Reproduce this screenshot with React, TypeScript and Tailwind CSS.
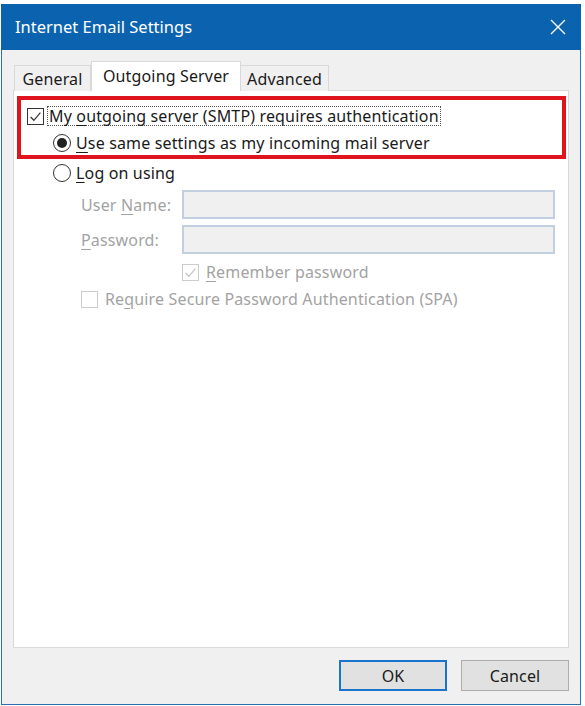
import React from 'react';

const font = { fontFamily: '"Noto Sans", "Open Sans", sans-serif' };

function CheckBox({ checked, disabled }: { checked?: boolean; disabled?: boolean }) {
  const stroke = disabled ? '#c4c4c4' : '#333333';
  return (
    <span
      className={`flex h-[17px] w-[17px] shrink-0 items-center justify-center border bg-white ${
        disabled ? 'border-[#cccccc]' : 'border-[#333333]'
      }`}
    >
      {checked && (
        <svg width="13" height="13" viewBox="0 0 12 12" fill="none">
          <path d="M1.5 6.5 L4.5 9.5 L10.5 2.5" stroke={stroke} strokeWidth="1.1" />
        </svg>
      )}
    </span>
  );
}

function Radio({ checked }: { checked?: boolean }) {
  return (
    <span className="flex h-[18px] w-[18px] shrink-0 items-center justify-center rounded-full border border-[#333333] bg-white">
      {checked && <span className="h-[10px] w-[10px] rounded-full bg-[#222222]" />}
    </span>
  );
}

function Key({ children }: { children: React.ReactNode }) {
  return <span className="underline underline-offset-[3px]">{children}</span>;
}

export default function App() {
  return (
    <div
      className="h-[706px] w-[585px] bg-white pl-[1px] pt-[4px] text-[16px] tracking-[0.15px] text-[#1a1a1a]"
      style={font}
    >
      <div className="flex h-[701px] w-[580px] flex-col border border-t-0 border-[#2d6fb0] bg-[#f0f0f0]">
        <div className="-mx-px flex h-[46px] shrink-0 items-center justify-between bg-[#0b63b0] pl-[14px] pr-[15px] text-white">
          <span className="text-[16.5px] tracking-normal">Internet Email Settings</span>
          <svg width="16" height="16" viewBox="0 0 16 16" stroke="white" strokeWidth="1.4">
            <path d="M1 1 L15 15 M15 1 L1 15" />
          </svg>
        </div>

        <div className="flex flex-1 flex-col px-[11px] pt-[10px]">
          <div className="flex h-[30px] items-end pl-[1px]">
            <div className="relative top-px flex h-[26px] w-[77px] items-center justify-center border border-b-0 border-[#d9d9d9] bg-[#f0f0f0]">
              General
            </div>
            <div className="relative top-px z-10 flex h-[30px] w-[150px] items-start justify-center border border-b-0 border-[#d9d9d9] bg-white pt-[2px]">
              Outgoing Server
            </div>
            <div className="relative top-px flex h-[26px] w-[88px] items-center justify-center border border-b-0 border-l-0 border-[#d9d9d9] bg-[#f0f0f0]">
              Advanced
            </div>
          </div>

          <div className="flex h-[558px] flex-col border border-[#d9d9d9] bg-white pl-[3px] pr-[2px] pt-[5px]">
            <div className="flex h-[63px] flex-col border-[4px] border-[#e0141e] pl-[6px] pt-[4px]">
              <div className="flex h-[25px] items-center gap-[3px]">
                <CheckBox checked />
                <span className="border border-dotted border-[#555555] px-px leading-[18px]">
                  My <Key>o</Key>utgoing server (SMTP) requires authentication
                </span>
              </div>
              <div className="flex h-[27px] items-center gap-[5px] pl-[26px] pt-[3px]">
                <Radio checked />
                <span>
                  <Key>U</Key>se same settings as my incoming mail server
                </span>
              </div>
            </div>

            <div className="flex h-[28px] items-center gap-[5px] pl-[36px]">
              <Radio />
              <span>
                <Key>L</Key>og on using
              </span>
            </div>

            <div className="flex flex-col gap-[6px] pl-[64px] pr-[11px] pt-[3px] text-[#a3a3a3]">
              <div className="flex items-center">
                <span className="w-[101px]">
                  User <Key>N</Key>ame:
                </span>
                <div className="h-[29px] flex-1 border-2 border-[#c2cfe0] bg-[#f0f0f0]" />
              </div>
              <div className="flex items-center">
                <span className="w-[101px]">
                  <Key>P</Key>assword:
                </span>
                <div className="h-[29px] flex-1 border-2 border-[#c2cfe0] bg-[#f0f0f0]" />
              </div>
              <div className="flex items-center gap-[7px] pl-[101px]">
                <CheckBox checked disabled />
                <span>
                  <Key>R</Key>emember password
                </span>
              </div>
              <div className="-mt-[3px] flex items-center gap-[7px]">
                <CheckBox disabled />
                <span>
                  Re<Key>q</Key>uire Secure Password Authentication (SPA)
                </span>
              </div>
            </div>
          </div>

          <div className="flex justify-end gap-[14px] pt-[12px]">
            <button className="h-[31px] w-[108px] border-2 border-[#1a74cc] bg-[#e1e1e1]">OK</button>
            <button className="h-[31px] w-[108px] border border-[#adadad] bg-[#e1e1e1]">Cancel</button>
          </div>
        </div>
      </div>
    </div>
  );
}
